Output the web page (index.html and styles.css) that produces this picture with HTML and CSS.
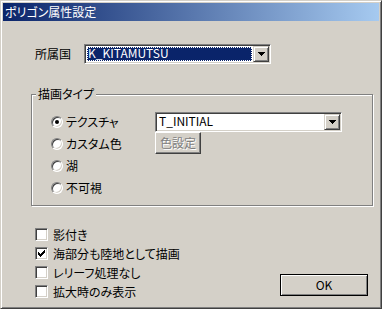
FILE: index.html
```html
<!DOCTYPE html>
<html lang="ja">
<head>
    <meta charset="UTF-8">
    <title>ポリゴン属性設定</title>
    <link rel="stylesheet" href="styles.css">
</head>
<body>
    <div class="window">
        <div class="titlebar">ポリゴン属性設定</div>
        <div class="dialog">
            <div class="field-row">
                <span class="field-label">所属国</span>
                <div class="combo">
                    <div class="combo-value selected">K_KITAMUTSU</div>
                    <div class="combo-btn">
                        <svg width="7" height="4" viewBox="0 0 7 4"><path d="M0 0H7V1H6V2H5V3H4V4H3V3H2V2H1V1H0Z" fill="#000"/></svg>
                    </div>
                </div>
            </div>

            <div class="group">
                <span class="group-label">描画タイプ</span>
                <div class="group-grid">
                    <label class="radio-row"><span class="radio checked"></span>テクスチャ</label>
                    <div class="combo">
                        <div class="combo-value">T_INITIAL</div>
                        <div class="combo-btn">
                            <svg width="7" height="4" viewBox="0 0 7 4"><path d="M0 0H7V1H6V2H5V3H4V4H3V3H2V2H1V1H0Z" fill="#000"/></svg>
                        </div>
                    </div>
                    <label class="radio-row"><span class="radio"></span>カスタム色</label>
                    <div><button class="btn btn-color" disabled>色設定</button></div>
                    <label class="radio-row"><span class="radio"></span>湖</label>
                    <div></div>
                    <label class="radio-row"><span class="radio"></span>不可視</label>
                    <div></div>
                </div>
            </div>

            <div class="footer">
                <ul class="checks">
                    <li class="check-row"><span class="checkbox"></span>影付き</li>
                    <li class="check-row"><span class="checkbox"><svg width="7" height="7" viewBox="0 0 7 7"><path d="M0 2H1V3H2V4H3V3H4V2H5V1H6V0H7V3H6V4H5V5H4V6H3V7H2V6H1V5H0Z" fill="#000"/></svg></span>海部分も陸地として描画</li>
                    <li class="check-row"><span class="checkbox"></span>レリーフ処理なし</li>
                    <li class="check-row"><span class="checkbox"></span>拡大時のみ表示</li>
                </ul>
                <button class="btn btn-default">OK</button>
            </div>
        </div>
    </div>
</body>
</html>
```

FILE: styles.css
```css
body {
    margin: 0;
    font-family: "Noto Sans CJK JP", sans-serif;
    font-size: 12px;
    line-height: 14px;
    color: #000;
    font-feature-settings: "palt";
}

/* classic window frame */
.window {
    width: 382px;
    height: 309px;
    box-sizing: border-box;
    background: #D4D0C8;
    border: 1px solid;
    border-color: #D4D0C8 #404040 #404040 #D4D0C8;
    box-shadow: inset 1px 1px #fff, inset -1px -1px #808080;
    padding: 2px;
}

.titlebar {
    height: 18px;
    line-height: 18px;
    padding-left: 2px;
    color: #fff;
    background: linear-gradient(to right, #0A246A, #A6CAF0);
}

.dialog {
    padding: 23px 6px 0 28px;
}

.field-row {
    display: flex;
    align-items: center;
    height: 20px;
    padding-left: 4px;
}

.field-label {
    width: 49px;
}

/* sunken combo box */
.combo {
    display: flex;
    width: 187px;
    height: 20px;
    box-sizing: border-box;
    padding: 1px;
    background: #fff;
    border: 1px solid;
    border-color: #808080 #fff #fff #808080;
    box-shadow: inset 1px 1px #404040, inset -1px -1px #D4D0C8;
}

.combo-value {
    flex: 1;
    margin: 1px;
    padding-left: 1px;
    line-height: 12px;
    white-space: nowrap;
}

.combo-value.selected {
    background: #0A246A;
    color: #fff;
    outline: 1px dotted #fff;
    outline-offset: -1px;
}

.combo-btn {
    display: flex;
    align-items: center;
    justify-content: center;
    width: 16px;
    height: 16px;
    box-sizing: border-box;
    background: #D4D0C8;
    border: 1px solid;
    border-color: #D4D0C8 #404040 #404040 #D4D0C8;
    box-shadow: inset 1px 1px #fff, inset -1px -1px #808080;
}

/* etched group box */
.group {
    position: relative;
    margin-top: 30px;
    padding: 17px 0 6px 19px;
    border: 1px solid #808080;
    box-shadow: inset 1px 1px #fff, 1px 1px #fff;
}

.group-label {
    position: absolute;
    top: -8px;
    left: 4px;
    padding: 0 2px;
    background: #D4D0C8;
}

.group-grid {
    display: grid;
    grid-template-columns: 104px 187px;
    grid-template-rows: 20px 23px 22px 22px;
}

.radio-row {
    display: flex;
    align-items: center;
}

.radio {
    position: relative;
    width: 12px;
    height: 12px;
    box-sizing: border-box;
    margin-right: 3px;
    border-radius: 50%;
    background: #fff;
    border: 1px solid;
    border-color: #808080 #fff #fff #808080;
    box-shadow: inset 1px 1px #404040, inset -1px -1px #D4D0C8;
}

.radio.checked::after {
    content: "";
    position: absolute;
    left: 3px;
    top: 3px;
    width: 4px;
    height: 4px;
    border-radius: 50%;
    background: #000;
}

/* push buttons */
.btn {
    margin: 0;
    padding: 0;
    font: inherit;
    color: #000;
    background: #D4D0C8;
    box-sizing: border-box;
    border: 1px solid;
    border-color: #fff #404040 #404040 #fff;
    box-shadow: inset -1px -1px #808080;
}

.btn-color {
    width: 46px;
    height: 22px;
}

.btn:disabled {
    color: #808080;
    text-shadow: 1px 1px #fff;
}

.btn-default {
    width: 88px;
    height: 22px;
    margin: 0 5px 5px 0;
    border-color: #000;
    box-shadow: inset 1px 1px #fff, inset -1px -1px #808080;
}

.footer {
    display: flex;
    justify-content: space-between;
    align-items: flex-end;
    margin-top: 19px;
}

.checks {
    list-style: none;
    margin: 0;
    padding: 0 0 0 4px;
}

.check-row {
    display: flex;
    align-items: center;
    height: 19px;
}

.checkbox {
    display: flex;
    align-items: center;
    justify-content: center;
    width: 13px;
    height: 13px;
    box-sizing: border-box;
    margin-right: 5px;
    background: #fff;
    border: 1px solid;
    border-color: #808080 #fff #fff #808080;
    box-shadow: inset 1px 1px #404040, inset -1px -1px #D4D0C8;
}
```
